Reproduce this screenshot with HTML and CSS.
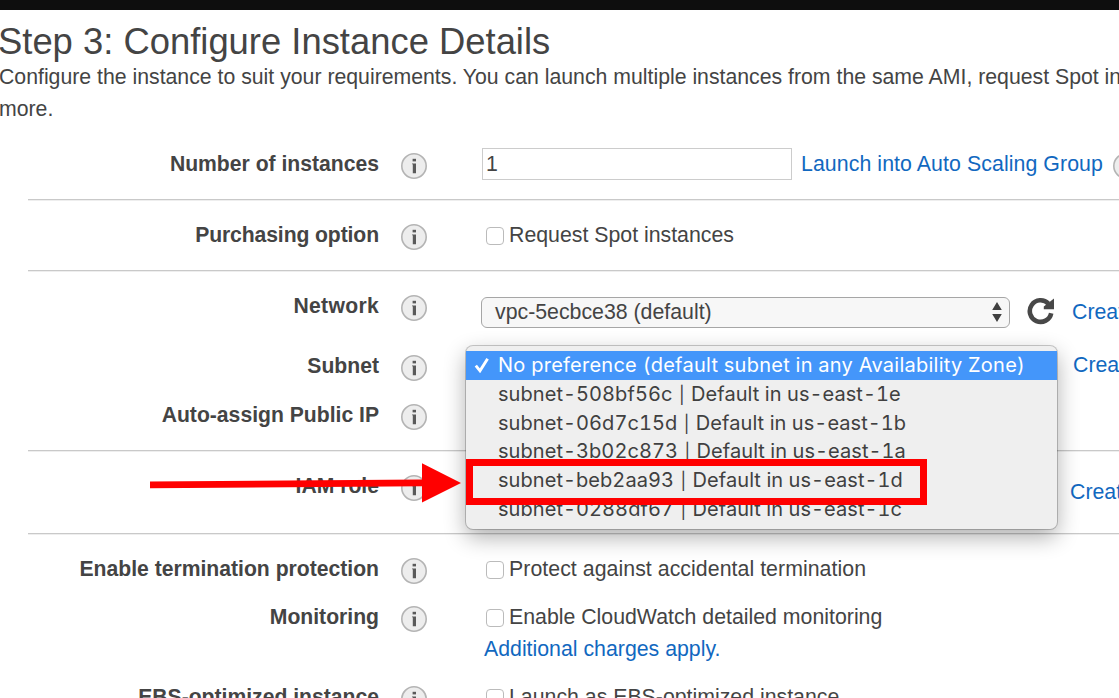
FILE: index.html
```html
<!DOCTYPE html>
<html lang="en">
<head>
<meta charset="utf-8">
<title>Step 3: Configure Instance Details</title>
<link rel="stylesheet" href="styles.css">
</head>
<body>
<svg class="defs" width="0" height="0">
  <symbol id="info" viewBox="0 0 28 28">
    <circle cx="14" cy="14" r="12.2" fill="#ededed" stroke="#b4b4b4" stroke-width="1.6"/>
    <rect x="12.6" y="6.8" width="3.4" height="2.6" fill="#5a5a5a"/>
    <path d="M12 11.4h4v9.8h-3.2v-9h-.8z" fill="#5a5a5a"/>
  </symbol>
</svg>
<div class="topbar"></div>
<main class="page">
  <h1 class="title">Step 3: Configure Instance Details</h1>
  <p class="intro">Configure the instance to suit your requirements. You can launch multiple instances from the same AMI, request Spot in<br>more.</p>
  <form class="form">
    <section class="group g1">
      <div class="row">
        <label class="label">Number of instances</label>
        <svg class="info"><use href="#info"/></svg>
        <div class="field">
          <div class="input">1</div>
          <a class="link after-input">Launch into Auto Scaling Group</a>
          <svg class="info trailing"><use href="#info"/></svg>
        </div>
      </div>
    </section>
    <section class="group g2">
      <div class="row">
        <label class="label snug">Purchasing option</label>
        <svg class="info"><use href="#info"/></svg>
        <div class="field"><i class="check"></i><span>Request Spot instances</span></div>
      </div>
    </section>
    <section class="group g3">
      <div class="row network">
        <label class="label wide">Network</label>
        <svg class="info"><use href="#info"/></svg>
        <div class="field low">
          <div class="select"><span>vpc-5ecbce38 (default)</span>
            <svg class="arrows" viewBox="0 0 10 20"><path d="M5 0l4.8 8H.2zM5 20l4.8-8H.2z" fill="#404040"/></svg>
          </div>
          <svg class="refresh" viewBox="0 0 28 28"><path d="M24.2 16.2A10.8 10.8 0 1 1 21.4 6.6" fill="none" stroke="#484848" stroke-width="4.6"/><path d="M27 1.6v10.6H16.8V9.4z" fill="#484848"/></svg>
          <a class="link">Create</a>
        </div>
      </div>
      <div class="row subnet">
        <label class="label">Subnet</label>
        <svg class="info"><use href="#info"/></svg>
        <div class="field raised"><a class="link far">Create</a></div>
      </div>
      <div class="row">
        <label class="label">Auto-assign Public IP</label>
        <svg class="info"><use href="#info"/></svg>
      </div>
    </section>
    <section class="group g4">
      <div class="row">
        <label class="label">IAM role</label>
        <svg class="info"><use href="#info"/></svg>
        <div class="field low"><a class="link far iam">Create</a></div>
      </div>
    </section>
    <section class="group g5">
      <div class="row termination">
        <label class="label">Enable termination protection</label>
        <svg class="info"><use href="#info"/></svg>
        <div class="field"><i class="check"></i><span class="airy">Protect against accidental termination</span></div>
      </div>
      <div class="row monitoring">
        <label class="label">Monitoring</label>
        <svg class="info"><use href="#info"/></svg>
        <div class="field stack">
          <div class="line"><i class="check"></i><span>Enable CloudWatch detailed monitoring</span></div>
          <a class="link charges">Additional charges apply.</a>
        </div>
      </div>
      <div class="row">
        <label class="label">EBS-optimized instance</label>
        <svg class="info"><use href="#info"/></svg>
        <div class="field"><i class="check"></i><span>Launch as EBS-optimized instance</span></div>
      </div>
    </section>
  </form>
</main>
<ul class="menu">
  <li class="item selected"><svg class="tick" viewBox="0 0 16 16"><path d="M1.8 8.6l4.2 5.2L13.6 1.8" fill="none" stroke="#fff" stroke-width="2.9"/></svg>No preference (default subnet in any Availability Zone)</li>
  <li class="item">subnet-508bf56c <b class="bar">|</b> Default in us-east-1e</li>
  <li class="item">subnet-06d7c15d <b class="bar">|</b> Default in us-east-1b</li>
  <li class="item">subnet-3b02c873 <b class="bar">|</b> Default in us-east-1a</li>
  <li class="item">subnet-beb2aa93 <b class="bar">|</b> Default in us-east-1d</li>
  <li class="item">subnet-0288df67 <b class="bar">|</b> Default in us-east-1c</li>
</ul>
<div class="highlight"></div>
<svg class="pointer" viewBox="0 0 312 40"><path d="M0 18.6L272 16.4V.3L311 20 272 39.5V23.2L0 25.2z" fill="#f00"/></svg>
</body>
</html>
```
FILE: styles.css
```css
* { box-sizing: border-box; }
html { overflow: hidden; }
body {
  margin: 0;
  width: 1119px;
  height: 698px;
  overflow: hidden;
  position: relative;
  background: #fff;
  color: #444;
  font: 21.3px/32px "Liberation Sans", Arial, sans-serif;
  white-space: nowrap;
}
.defs { position: absolute; }
.topbar { height: 10px; background: #0e0e0e; }
.page { overflow: hidden; height: 688px; }
.title {
  margin: 0 0 0 -2px;
  padding-top: 12px;
  font-size: 36.4px;
  line-height: 39px;
  font-weight: 400;
}
.intro { margin: 0 0 0 -1px; height: 68px; font-size: 21.25px; }
.form { margin: 0 0 0 28px; }
.group {
  border-bottom: 1px solid #c9c9c9;
  box-shadow: 0 1px 0 #eee;
}
.g1 { height: 71px; padding-top: 19px; }
.g2 { height: 71px; padding-top: 19px; }
.g3 { height: 180px; padding-top: 19px; }
.g4 { height: 83px; padding-top: 19px; }
.g5 { padding-top: 19px; border: 0; box-shadow: none; }
.row {
  display: grid;
  grid-template-columns: 351px 28px 1fr;
  column-gap: 21px;
  height: 32px;
}
.network { height: 60px; }
.subnet { height: 49px; }
.termination { height: 48px; }
.monitoring { height: 80px; }
.label { text-align: right; font-weight: 700; font-size: 21.15px; }
.wide { letter-spacing: 0.3px; }
.snug { letter-spacing: -0.1px; }
.airy { letter-spacing: 0.05px; }
.info { width: 28px; height: 28px; margin-top: 4px; }
.field { display: flex; align-items: center; height: 32px; padding-left: 33px; }
.low { margin-top: 6px; }
.raised { margin-top: -1px; }
.stack { display: block; }
.line { display: flex; align-items: center; height: 32px; }
.link { color: #1168c0; }
.input {
  width: 310px;
  height: 32px;
  border: 1px solid #ccc;
  padding-left: 3px;
  line-height: 30px;
}
.after-input { margin-left: 9px; letter-spacing: 0.08px; }
.trailing { margin-left: 9px; flex: none; }
.check {
  width: 18px;
  height: 18px;
  margin: 1px 5px 0 4px;
  border: 1px solid #bbb;
  border-radius: 4px;
  background: #fff;
  flex: none;
}
.select {
  display: flex;
  justify-content: space-between;
  align-items: center;
  width: 529px;
  height: 31px;
  flex: none;
  margin-left: -1px;
  padding: 0 7px 0 13px;
  border: 1px solid #a6a6a6;
  border-radius: 6px;
  background: #f7f7f7;
}
.arrows { width: 10px; height: 20px; }
.refresh { width: 28px; height: 28px; margin: -2px 17px 0 17px; flex: none; }
.far { margin-left: 591px; }
.iam { margin-left: 588px; }
.charges { display: block; margin-left: 2px; }
.menu {
  position: absolute;
  left: 466px;
  top: 346px;
  width: 591px;
  height: 183px;
  margin: 0;
  padding: 5px 0;
  list-style: none;
  border-radius: 7px;
  background: #efefef;
  box-shadow: 0 0 0 1px rgba(0,0,0,.2), 0 8px 22px rgba(0,0,0,.32);
  font: 20px/28.75px Inter, sans-serif;
  font-variant-numeric: tabular-nums;
  letter-spacing: 0.06px;
  color: #404040;
}
.item { height: 28.75px; padding-left: 32px; position: relative; }
.selected { background: #4496fa; color: #fff; letter-spacing: 0.25px; }
.bar { font-weight: 400; font-size: 17px; margin: 0 1px; }
.tick { position: absolute; left: 8px; top: 6px; width: 16px; height: 16px; }
.highlight {
  position: absolute;
  left: 466px;
  top: 459px;
  width: 461px;
  height: 46px;
  border: 7px solid #f00;
}
.pointer { position: absolute; left: 150px; top: 463px; width: 312px; height: 40px; }
```
